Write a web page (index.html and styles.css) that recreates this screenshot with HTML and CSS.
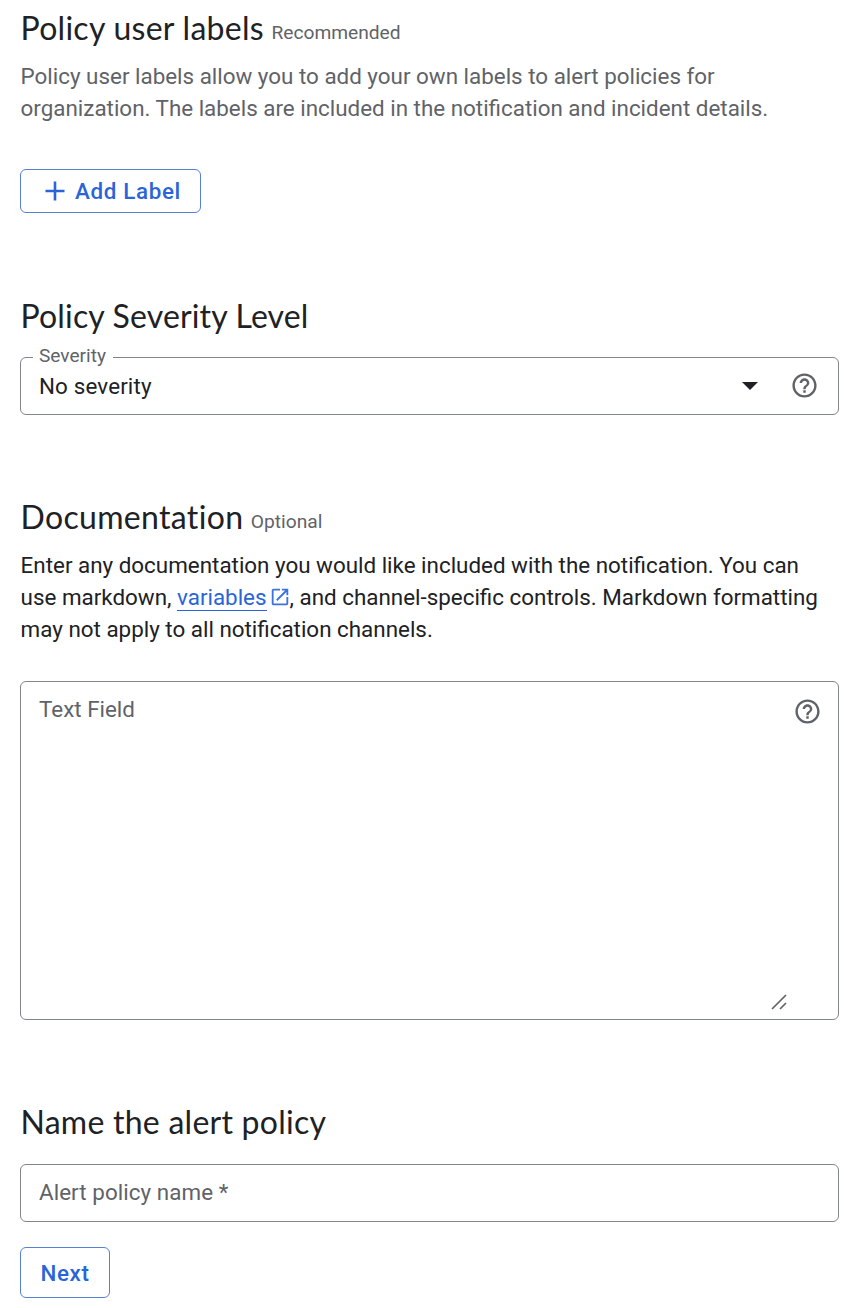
FILE: index.html
```
<!DOCTYPE html>
<html lang="en">
<head>
<meta charset="utf-8">
<title>Alert policy details</title>
<link rel="stylesheet" href="styles.css">
</head>
<body>
<svg class="sprite" width="0" height="0" aria-hidden="true">
  <symbol id="help" viewBox="0 0 24 24"><path d="M11 18h2v-2h-2v2zm1-16C6.48 2 2 6.48 2 12s4.480 10 10 10 10-4.480 10-10S17.520 2 12 2zm0 18c-4.410 0-8-3.590-8-8s3.590-8 8-8 8 3.590 8 8-3.590 8-8 8zm0-14c-2.210 0-4 1.790-4 4h2c0-1.100.9-2 2-2s2 .9 2 2c0 2-3 1.750-3 5h2c0-2.250 3-2.500 3-5 0-2.210-1.790-4-4-4z"/></symbol>
</svg>
<main class="form">
  <section class="section labels">
    <h2 class="title title-labels">Policy user labels <span class="hint">Recommended</span></h2>
    <p class="text muted">Policy user labels allow you to add your own labels to alert policies for organization. The labels are included in the notification and incident details.</p>
    <button class="button add" type="button">
      <svg class="plus" viewBox="0 0 20 20"><path d="M10 .5v19M.5 10h19"/></svg>
      <span>Add Label</span>
    </button>
  </section>

  <section class="section">
    <h2 class="title title-severity">Policy Severity Level</h2>
    <div class="field select">
      <span class="float-label">Severity</span>
      <span class="value">No severity</span>
      <svg class="arrow" viewBox="0 0 16 8"><path d="M0 0h16L8 8z"/></svg>
      <svg class="help"><use href="#help"/></svg>
    </div>
  </section>

  <section class="section">
    <h2 class="title title-docs">Documentation <span class="hint">Optional</span></h2>
    <p class="text">Enter any documentation you would like included with the notification. You can use markdown, <a class="link" href="#">variables</a><svg class="external" viewBox="0 0 24 24"><path d="M19 19H5V5h7V3H5c-1.110 0-2 .9-2 2v14c0 1.100.89 2 2 2h14c1.100 0 2-.9 2-2v-7h-2v7zM14 3v2h3.590l-9.830 9.830 1.410 1.410L19 6.410V10h2V3h-7z"/></svg>, and channel-specific controls. Markdown formatting may not apply to all notification channels.</p>
    <div class="field area">
      <span class="placeholder">Text Field</span>
      <div class="area-side">
        <svg class="help"><use href="#help"/></svg>
        <svg class="grip" viewBox="0 0 16 16"><path d="M1 15L15 1M9 15l6-6"/></svg>
      </div>
    </div>
  </section>

  <section class="section">
    <h2 class="title title-name">Name the alert policy</h2>
    <div class="field name"><span class="placeholder">Alert policy name *</span></div>
    <button class="button next" type="button">Next</button>
  </section>
</main>
</body>
</html>
```
FILE: styles.css
```
* { box-sizing: border-box; }

body {
  margin: 0;
  background: #fff;
  color: #202124;
  font: 22.4px/32px Roboto, sans-serif;
}

.sprite { position: absolute; }

.form {
  display: flex;
  flex-direction: column;
  gap: 82px;
  padding: 8px 15px 10px 20px;
}

.section {
  display: flex;
  flex-direction: column;
  align-items: flex-start;
}

.labels { margin-bottom: 1px; }

.title {
  height: 39px;
  margin: 0;
  padding-left: 0.5px;
  font: 400 32px/40px Lato, sans-serif;
  white-space: nowrap;
}

.title-labels { letter-spacing: 0.28px; }
.title-severity { letter-spacing: 0.16px; }
.title-docs { letter-spacing: 0.33px; }
.title-name { letter-spacing: 0.25px; }

.hint {
  margin-left: -1px;
  color: #5f6368;
  font: 19.2px/1 Roboto, sans-serif;
  letter-spacing: 0;
  vertical-align: 1px;
}

.text {
  width: 806px;
  margin: 13px 0 0;
  padding-left: 0.6px;
}

.muted { color: #5f6368; }

.button {
  display: flex;
  align-items: center;
  justify-content: center;
  padding: 0;
  border: 1px solid #5681d2;
  border-radius: 6px;
  background: #fff;
  color: #2a64d9;
  font: 500 22.4px/32px Roboto, sans-serif;
  letter-spacing: 0.65px;
}

.add {
  width: 181px;
  height: 44px;
  margin-top: 45px;
  padding-left: 5px;
  gap: 10px;
}

.plus {
  width: 20px;
  height: 20px;
  fill: none;
  stroke: currentColor;
  stroke-width: 2.6;
}

.next {
  width: 90px;
  height: 51px;
  margin-top: 25px;
}

.field {
  display: flex;
  width: 819px;
  border: 1px solid #80868b;
  border-radius: 6px;
}

.help {
  width: 29px;
  height: 29px;
  fill: #5f6368;
}

.select {
  position: relative;
  height: 58px;
  margin-top: 22px;
  padding: 0 19.500px 0 18px;
  align-items: center;
}

.select .help { margin-bottom: 1px; }

.float-label {
  position: absolute;
  top: -13px;
  left: 12px;
  padding: 0 7px 0 6px;
  background: #fff;
  color: #5f6368;
  font-size: 19.1px;
  line-height: 22px;
}

.value {
  flex: 1;
  letter-spacing: 0.14px;
}

.arrow {
  width: 16px;
  height: 8px;
  margin-right: 31.500px;
  fill: #202124;
}

.link {
  border-bottom: 1px solid #2a64d9;
  color: #2a64d9;
  text-decoration: none;
}

.external {
  width: 22px;
  height: 22px;
  margin: 0 -1.5px 0 2.500px;
  vertical-align: -3px;
  fill: #3c72dd;
}

.area {
  height: 339px;
  margin-top: 36px;
  padding: 11px 16px 9px 18px;
  justify-content: space-between;
}

.placeholder { color: #5f6368; }

.area-side {
  display: flex;
  flex-direction: column;
  align-items: flex-end;
  justify-content: space-between;
  padding-top: 4px;
}

.grip {
  width: 16px;
  height: 16px;
  margin-right: 35px;
  fill: none;
  stroke: #5f6368;
  stroke-width: 1.7;
}

.name {
  height: 58px;
  margin-top: 23px;
  padding: 0 0 2px 18px;
  align-items: center;
  letter-spacing: 0.06px;
}
```
